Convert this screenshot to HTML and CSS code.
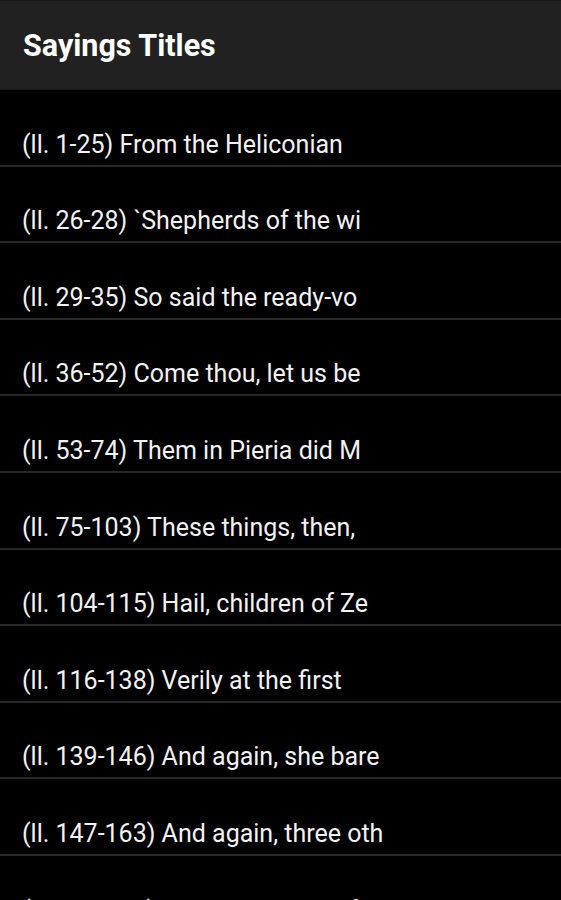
FILE: index.html
```html
<!DOCTYPE html>
<html lang="en">
<head>
  <meta charset="UTF-8" />
  <meta name="viewport" content="width=device-width, initial-scale=1.0"/>
  <title>Sayings Titles</title>
  <link rel="stylesheet" href="styles.css">
</head>
<body>
  <header class="bar">
    <h1>Sayings Titles</h1>
  </header>

  <ul class="titles">
    <li>(ll. 1-25) From the Heliconian</li>
    <li>(ll. 26-28) `Shepherds of the wi</li>
    <li>(ll. 29-35) So said the ready-vo</li>
    <li>(ll. 36-52) Come thou, let us be</li>
    <li>(ll. 53-74) Them in Pieria did M</li>
    <li>(ll. 75-103) These things, then,</li>
    <li>(ll. 104-115) Hail, children of Ze</li>
    <li>(ll. 116-138) Verily at the first</li>
    <li>(ll. 139-146) And again, she bare</li>
    <li>(ll. 147-163) And again, three oth</li>
    <li>(ll. 164-185) So she said; and fe</li>
  </ul>
</body>
</html>
```

FILE: styles.css
```css
html, body { margin: 0; padding: 0; background: #000; }
body { font-family: Roboto, "Noto Sans", sans-serif; color: #f2f2f2; overflow: hidden; }

.bar { background: #212121; height: 88px; border-top: 1px solid #1a1a1a; border-bottom: 1px solid #161616; display: flex; align-items: center; padding: 0 23px; }
.bar h1 { margin: 0; font-size: 30.5px; font-weight: 700; color: #fff; }

.titles { list-style: none; margin: 0; padding: 0; }
.titles li { border-bottom: 2px solid #282828; display: flex; align-items: flex-end; padding: 0 22px 6px; box-sizing: border-box; height: 76.6px; font-size: 25px; line-height: 28px; white-space: nowrap; }
```
